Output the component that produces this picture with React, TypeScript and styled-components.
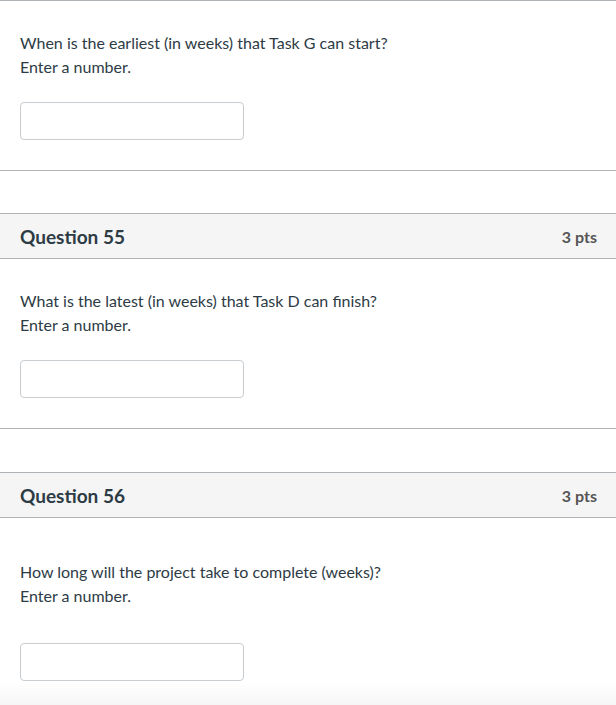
import styled, { createGlobalStyle } from "styled-components";

const GlobalStyle = createGlobalStyle`
  html, body {
    margin: 0;
    padding: 0;
    background: #ffffff;
  }
  body {
    font-family: Lato, "Open Sans", "Liberation Sans", sans-serif;
    color: #2d3b45;
    overflow: hidden;
  }
`;

const border_grey = "#adb3b7";

const Page = styled.div`
  display: flex;
  flex-direction: column;
  gap: 42px;
  width: 616px;
`;

const QuestionCard = styled.section<{ $loose?: boolean }>`
  display: flex;
  flex-direction: column;
  margin-top: ${(p) => (p.$loose ? "1px" : "0")};
  border-bottom: 1px solid ${border_grey};
`;

const QuestionHeader = styled.header`
  display: flex;
  align-items: center;
  justify-content: space-between;
  height: 44px;
  padding: 0 19px 0 20px;
  background: #f5f5f5;
  border-top: 1px solid ${border_grey};
  border-bottom: 1px solid ${border_grey};

  h2 {
    margin: 0;
    font-size: 19px;
    font-weight: 700;
    color: #2d3b45;
  }

  span {
    font-size: 16px;
    font-weight: 700;
    color: #555555;
  }
`;

const QuestionBody = styled.div<{ $topLine?: boolean; $loose?: boolean }>`
  display: flex;
  flex-direction: column;
  align-items: flex-start;
  gap: ${(p) => (p.$loose ? "35px" : "23px")};
  padding: ${(p) => (p.$loose ? "42px" : "30px")} 20px 30px;
  border-top: ${(p) => (p.$topLine ? `1px solid ${border_grey}` : "none")};
`;

const Prompt = styled.div`
  font-size: 16px;
  line-height: 24px;

  p {
    margin: 0;
  }
`;

const AnswerInput = styled.input`
  box-sizing: border-box;
  width: 224px;
  height: 38px;
  margin: 0;
  padding: 0 12px;
  border: 1px solid #c7cdd1;
  border-radius: 4px;
  background: #ffffff;
  font-family: inherit;
  font-size: 14px;
  color: #2d3b45;
  outline: none;
`;

const BottomFade = styled.div`
  position: fixed;
  left: 0;
  right: 0;
  bottom: 0;
  height: 22px;
  background: linear-gradient(rgba(245, 245, 245, 0), rgba(245, 245, 245, 0.9));
  pointer-events: none;
`;

interface Question {
  number?: number;
  points?: string;
  text: string;
  loose?: boolean;
}

const questions: Question[] = [
  { text: "When is the earliest (in weeks) that Task G can start?" },
  {
    number: 55,
    points: "3 pts",
    text: "What is the latest (in weeks) that Task D can finish?",
  },
  {
    number: 56,
    points: "3 pts",
    text: "How long will the project take to complete (weeks)?",
    loose: true,
  },
];

export default function App() {
  return (
    <>
      <GlobalStyle />
      <Page>
        {questions.map((q, i) => (
          <QuestionCard key={i} $loose={q.loose}>
            {q.number !== undefined && (
              <QuestionHeader>
                <h2>Question {q.number}</h2>
                <span>{q.points}</span>
              </QuestionHeader>
            )}
            <QuestionBody $topLine={q.number === undefined} $loose={q.loose}>
              <Prompt>
                <p>{q.text}</p>
                <p>Enter a number.</p>
              </Prompt>
              <AnswerInput type="text" aria-label="Answer" />
            </QuestionBody>
          </QuestionCard>
        ))}
      </Page>
      <BottomFade />
    </>
  );
}
